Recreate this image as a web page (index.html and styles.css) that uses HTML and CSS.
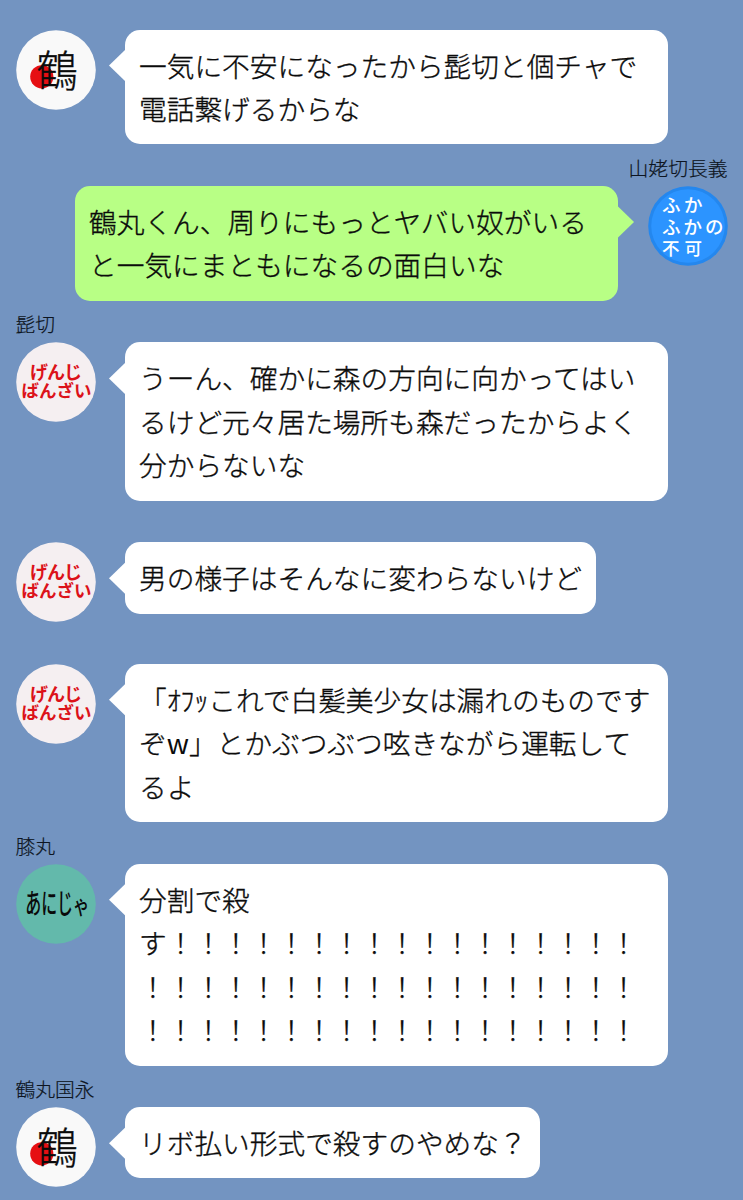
FILE: index.html
```html
<!DOCTYPE html>
<html lang="ja">
<head>
<meta charset="utf-8">
<title>トーク</title>
<link rel="stylesheet" href="styles.css">
</head>
<body>
<main class="chat">
  <article class="message">
    <div class="name"></div>
    <div class="row">
      <svg class="avatar" viewBox="0 0 80 80">
        <circle cx="40" cy="40" r="39.8" fill="#f9f9f9"/>
        <circle cx="25.8" cy="46.8" r="11.6" fill="#e60f13"/>
        <text class="ink" transform="translate(20.8 56.8) scale(1 1.06)" font-size="41">鶴</text>
      </svg>
      <p class="bubble wide">一気に不安になったから髭切と個チャで<br>電話繋げるからな</p>
    </div>
  </article>
  <article class="message mine">
    <div class="name">山姥切長義</div>
    <div class="row">
      <svg class="avatar" viewBox="0 0 80 80">
        <circle cx="40" cy="40" r="39.8" fill="#2487ee"/>
        <circle cx="40" cy="40" r="36.8" fill="#2c94ff"/>
        <text class="white" x="14" y="26" font-size="18.5" textLength="40.5">ふか</text>
        <text class="white" x="14" y="47.5" font-size="18.5" textLength="61.5">ふかの</text>
        <text class="white" x="14" y="69" font-size="17.5" textLength="40">不可</text>
      </svg>
      <p class="bubble wide">鶴丸くん、周りにもっとヤバい奴がいる<br>と一気にまともになるの面白いな</p>
    </div>
  </article>
  <article class="message">
    <div class="name">髭切</div>
    <div class="row">
      <svg class="avatar" viewBox="0 0 80 80">
        <circle cx="40" cy="40" r="39.8" fill="#f5eff1"/>
        <text class="red" x="14" y="37" font-size="18" textLength="52">げんじ</text>
        <text class="red" x="5.5" y="54.7" font-size="17.5" textLength="70">ばんざい</text>
      </svg>
      <p class="bubble wide">うーん、確かに森の方向に向かってはい<br>るけど元々居た場所も森だったからよく<br>分からないな</p>
    </div>
  </article>
  <article class="message">
    <div class="name"></div>
    <div class="row">
      <svg class="avatar" viewBox="0 0 80 80">
        <circle cx="40" cy="40" r="39.8" fill="#f5eff1"/>
        <text class="red" x="14" y="37" font-size="18" textLength="52">げんじ</text>
        <text class="red" x="5.5" y="54.7" font-size="17.5" textLength="70">ばんざい</text>
      </svg>
      <p class="bubble">男の様子はそんなに変わらないけど</p>
    </div>
  </article>
  <article class="message">
    <div class="name"></div>
    <div class="row">
      <svg class="avatar" viewBox="0 0 80 80">
        <circle cx="40" cy="40" r="39.8" fill="#f5eff1"/>
        <text class="red" x="14" y="37" font-size="18" textLength="52">げんじ</text>
        <text class="red" x="5.5" y="54.7" font-size="17.5" textLength="70">ばんざい</text>
      </svg>
      <p class="bubble wide">「ｵﾌｯこれで白髪美少女は漏れのものです<br>ぞ<span class="latin">w</span>」とかぶつぶつ呟きながら運転して<br>るよ</p>
    </div>
  </article>
  <article class="message">
    <div class="name">膝丸</div>
    <div class="row">
      <svg class="avatar" viewBox="0 0 80 80">
        <circle cx="40" cy="40" r="39.8" fill="#63b9ab"/>
        <text class="black" transform="translate(9.2 50.4) scale(.56 1)" font-size="28.5">あにじ</text>
        <text class="black" transform="translate(57 50.4) scale(.68 1)" font-size="24">ゃ</text>
      </svg>
      <p class="bubble wide">分割で殺<br>す！！！！！！！！！！！！！！！！！<br>！！！！！！！！！！！！！！！！！！<br>！！！！！！！！！！！！！！！！！！</p>
    </div>
  </article>
  <article class="message">
    <div class="name">鶴丸国永</div>
    <div class="row">
      <svg class="avatar" viewBox="0 0 80 80">
        <circle cx="40" cy="40" r="39.8" fill="#f9f9f9"/>
        <circle cx="25.8" cy="46.8" r="11.6" fill="#e60f13"/>
        <text class="ink" transform="translate(20.8 56.8) scale(1 1.06)" font-size="41">鶴</text>
      </svg>
      <p class="bubble">リボ払い形式で殺すのやめな？</p>
    </div>
  </article>
</main>
</body>
</html>
```
FILE: styles.css
```css
* { box-sizing: border-box; }

body {
  margin: 0;
  height: 1200px;
  overflow: hidden;
  background: #7394c1;
  color: #0b0b0b;
  font-family: "Noto Sans CJK JP", sans-serif;
  font-weight: 300;
}

.chat {
  display: flex;
  flex-direction: column;
  margin-top: -12px;
  padding: 0 15.5px;
}

.name {
  display: flex;
  align-items: flex-end;
  height: 41.6px;
  padding-bottom: 5px;
  font-size: 19.8px;
  line-height: 26px;
  color: #0d1521;
  -webkit-text-stroke: .2px;
}

.row {
  display: flex;
  align-items: flex-start;
  gap: 29.5px;
}

.mine .name { justify-content: flex-end; }
.mine .row { flex-direction: row-reverse; }

.avatar {
  flex: none;
  width: 80px;
  height: 80px;
}

.bubble {
  position: relative;
  margin: 0;
  padding: 14px 13.5px 13.8px 14px;
  border-radius: 15px;
  background: #fff;
  font-size: 27.7px;
  line-height: 43.5px;
  white-space: nowrap;
  -webkit-text-stroke: .35px;
}

.wide { width: 543px; }

.latin {
  font-weight: 400;
  -webkit-text-stroke: 0;
}

/* Speech tail pointing at the avatar */
.bubble::before {
  content: "";
  position: absolute;
  top: 19.5px;
  left: -16px;
  width: 17px;
  height: 33px;
  background: inherit;
  clip-path: polygon(0 50%, 100% 0, 100% 100%);
}

.mine .bubble { background: #b8ff85; }

.mine .bubble::before {
  left: auto;
  right: -16px;
  clip-path: polygon(100% 50%, 0 0, 0 100%);
}

.ink { fill: #0a0a0a; font-weight: 300; stroke: #0a0a0a; stroke-width: .4px; }
.red { fill: #dc1219; font-weight: 700; }
.white { fill: #fff; font-weight: 500; }
.black { fill: #0a0a0a; font-weight: 500; }
```
